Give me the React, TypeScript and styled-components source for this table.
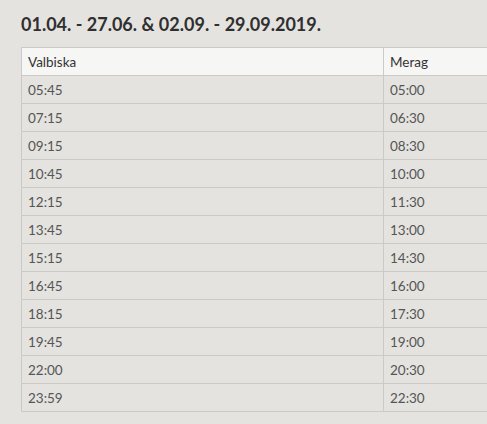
import React from 'react'
import styled, { createGlobalStyle } from 'styled-components'

const GlobalStyle = createGlobalStyle`
  html, body {
    margin: 0;
    padding: 0;
    background: #e4e3df;
  }
  body {
    font-family: Lato, "Open Sans", sans-serif;
    overflow: hidden;
  }
`

const StyledPage = styled.div`
  width: 487px;
  height: 424px;
  padding: 13px 0 0 21px;
  box-sizing: border-box;
  overflow: hidden;
`

const StyledTitle = styled.h2`
  margin: 0 0 12px 0;
  font-size: 18px;
  line-height: 22px;
  font-weight: 700;
  color: #2f2f2f;
  white-space: nowrap;
`

const StyledTable = styled.table`
  width: 500px;
  border-collapse: collapse;
  table-layout: fixed;
  font-size: 13.5px;
`

const StyledCol = styled.col<{ $width: number }>`
  width: ${p => p.$width}px;
`

const StyledHeadCell = styled.th`
  height: 27px;
  padding: 0 6px;
  text-align: left;
  font-weight: 400;
  color: #333;
  background: #f6f6f5;
  border: 1px solid #cbcac6;
`

const StyledCell = styled.td`
  height: 27px;
  padding: 0 6px;
  color: #555;
  border: 1px solid #cbcac6;
`

const rows: [string, string][] = [
  ['05:45', '05:00'],
  ['07:15', '06:30'],
  ['09:15', '08:30'],
  ['10:45', '10:00'],
  ['12:15', '11:30'],
  ['13:45', '13:00'],
  ['15:15', '14:30'],
  ['16:45', '16:00'],
  ['18:15', '17:30'],
  ['19:45', '19:00'],
  ['22:00', '20:30'],
  ['23:59', '22:30'],
]

const App = () => {
  return (
    <StyledPage>
      <GlobalStyle />
      <StyledTitle>01.04. - 27.06. &amp; 02.09. - 29.09.2019.</StyledTitle>
      <StyledTable>
        <colgroup>
          <StyledCol $width={362} />
          <StyledCol $width={138} />
        </colgroup>
        <thead>
          <tr>
            <StyledHeadCell>Valbiska</StyledHeadCell>
            <StyledHeadCell>Merag</StyledHeadCell>
          </tr>
        </thead>
        <tbody>
          {rows.map(([from, to]) => (
            <tr key={from}>
              <StyledCell>{from}</StyledCell>
              <StyledCell>{to}</StyledCell>
            </tr>
          ))}
        </tbody>
      </StyledTable>
    </StyledPage>
  )
}

export default App
